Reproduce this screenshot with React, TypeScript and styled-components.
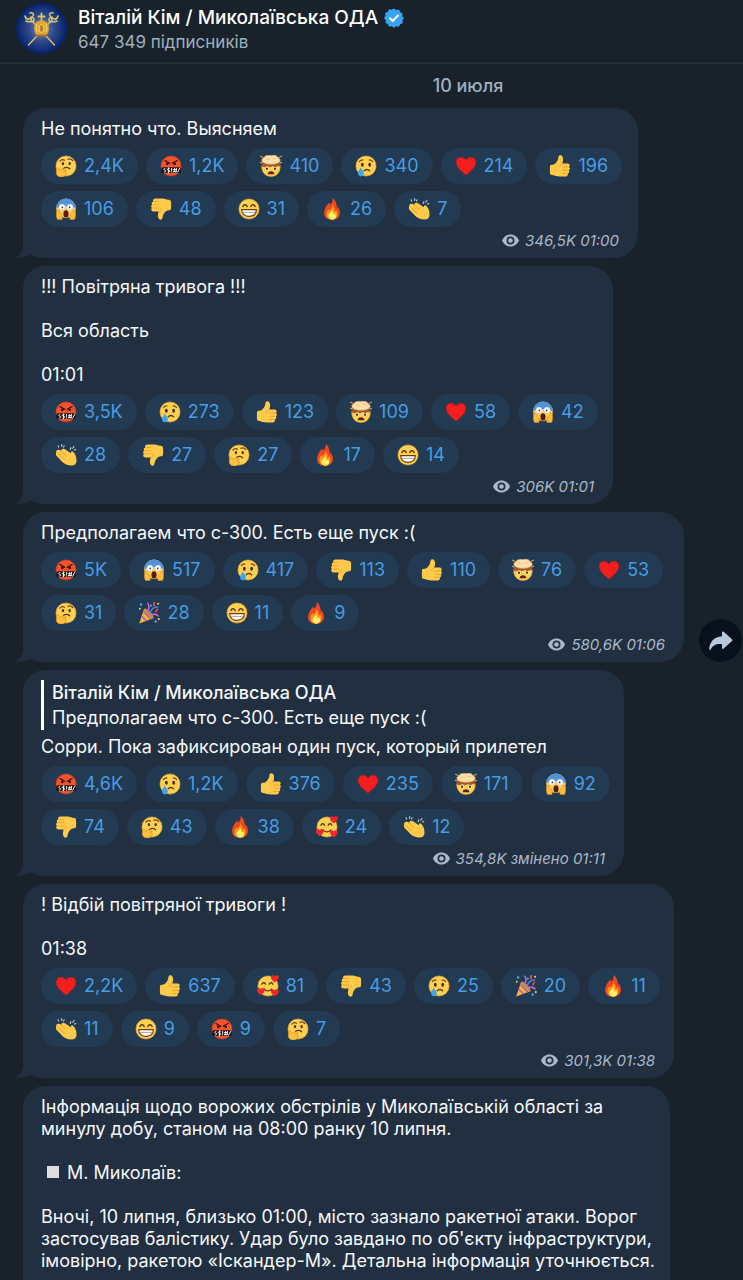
import React from 'react';
import styled, { createGlobalStyle } from 'styled-components';

const Global = createGlobalStyle`
  * { box-sizing: border-box; }
  body {
    margin: 0;
    background: #19222b;
    color: #f4f8fb;
    font-family: Inter, "Liberation Sans", sans-serif;
    font-size: 18px;
    line-height: 22px;
  }
  p, h1, button { margin: 0; font: inherit; }
`;

const Page = styled.div`
  height: 100vh;
  display: flex;
  flex-direction: column;
  overflow: hidden;
`;

const Header = styled.header`
  flex: none;
  display: flex;
  align-items: center;
  gap: 11px;
  height: 64px;
  padding: 0 16px 5px;
  border-bottom: 2px solid #212e3a;
`;

const Heading = styled.div`
  padding-top: 2px;
`;

const Title = styled.h1`
  display: flex;
  align-items: center;
  gap: 6px;
  font-size: 19px;
  font-weight: 500;
  line-height: 25px;
  color: #ffffff;
`;

const Subtitle = styled.p`
  font-size: 17px;
  line-height: 24px;
  color: #9fb0be;
`;

const Feed = styled.main`
  display: flex;
  flex-direction: column;
  gap: 8px;
  min-height: 0;
  padding: 10px 0 0 23px;
  > * { flex: none; }
`;

const DateLabel = styled.div`
  padding: 0 0 2px 170px;
  text-align: center;
  font-weight: 500;
  color: #9fb1c1;
  line-height: 24px;
`;

const MessageRow = styled.div`
  display: flex;
  align-items: flex-end;
  gap: 15px;
`;

const Bubble = styled.article<{ $width: number; $continues?: boolean }>`
  position: relative;
  flex: 0 1 ${(p) => p.$width}px;
  padding: 10px 10px ${(p) => (p.$continues ? 40 : 8)}px 18px;
  border-radius: 22px 24px 24px 20px;
  background: #222f41;
`;

const Tail = styled.svg`
  position: absolute;
  left: -8px;
  bottom: 0;
`;

const Body = styled.p`
  white-space: pre-line;
`;

const Quote = styled.blockquote`
  margin: 0 0 6px;
  padding-left: 8px;
  border-left: 3px solid #ffffff;
  line-height: 25px;
`;

const Author = styled.p`
  font-weight: 500;
`;

const Reactions = styled.div`
  display: flex;
  flex-wrap: wrap;
  gap: 7px 8px;
  margin-top: 8px;
`;

const Reaction = styled.button`
  display: flex;
  align-items: center;
  gap: 7px;
  height: 36px;
  padding: 0 14px;
  border: 0;
  border-radius: 18px;
  background: #223a52;
  color: #479de4;
`;

const Meta = styled.footer`
  display: flex;
  align-items: center;
  justify-content: flex-end;
  gap: 6px;
  margin: 4px 9px 0 0;
  font-size: 15px;
  line-height: 19px;
  font-style: italic;
  color: #a9b8c9;
`;

const Share = styled.button`
  display: grid;
  place-items: center;
  width: 43px;
  height: 43px;
  padding: 0;
  border: 0;
  border-radius: 50%;
  background: #06111d;
`;

const Square = styled.span`
  display: inline-block;
  width: 12px;
  height: 12px;
  margin: 0 8px 1px 6px;
  background: #dcdee0;
`;

type Kind = 'think' | 'curse' | 'blown' | 'cry' | 'heart' | 'up' | 'down' | 'scream' | 'grin' | 'fire' | 'clap' | 'party' | 'adore';

const Face = ({ fill = '#ffd052', edge = '#f0a92f' }) => (
  <circle cx="18" cy="18" r="16.5" fill={fill} stroke={edge} strokeWidth="1" />
);

const Hand = () => (
  <g>
    <path d="M1.500 19c0-2 1.500-3 4-3 4 0 8-5 9.500-9.500.4-1.500 0-5.500 3-6 4-.3 5.500 4 5 8-.2 2-.8 4-1.300 5.500H30c4.500 0 5 4.500 2.500 5.600 2.500 1.400 2.200 4.700-.3 5.500 1.900 1.600 1 4.600-1.500 5.100 1.100 2.400-.6 4.800-3.500 4.800H17c-4 0-7-1-9.500-2-3.500 0-6-1-6-4z" fill="#ffc94a" />
    <path d="M22 19.700h9M22.500 25h8.500M22.500 30.200h7" stroke="#e39b2c" strokeWidth="1.200" strokeLinecap="round" />
    <path d="M21.500 14c-3 1-4 3-4 5" stroke="#e39b2c" strokeWidth="1.200" fill="none" strokeLinecap="round" />
  </g>
);

const heartPath = 'M18 33C10 26 2 20 2 11.500 2 2.500 14 .5 18 9 22 .5 34 2.500 34 11.500 34 20 26 26 18 33z';

const art: Record<Kind, React.ReactNode> = {
  think: (
    <g>
      <Face />
      <path d="M8 10c2-2.500 5-3 7.500-1.500M21 7c3-1.500 6-.5 8 2" stroke="#6b3f14" strokeWidth="2" fill="none" strokeLinecap="round" />
      <ellipse cx="13" cy="14" rx="1.900" ry="2.600" fill="#4a2b10" />
      <ellipse cx="24" cy="14" rx="1.900" ry="2.600" fill="#4a2b10" />
      <path d="M14 22c3-2 7-2 10 .5" stroke="#5c3512" strokeWidth="2" fill="none" strokeLinecap="round" />
      <path d="M3 22c2-1 3 0 3.500 3l9-2.500c3-.5 3.500 2.500 1 3.300L14 27c4 0 5 2 4 4-1 3.500-4 5-8 5-5 0-8-3-8-7z" fill="#ffc13d" stroke="#d98a22" strokeWidth="1" />
    </g>
  ),
  curse: (
    <g>
      <Face fill="#f2552c" edge="#d93c1c" />
      <path d="M8 9l8 4.500M28 9l-8 4.500" stroke="#3b0d08" strokeWidth="2.200" strokeLinecap="round" />
      <circle cx="12" cy="14.500" r="2.300" fill="#3b0d08" />
      <circle cx="24" cy="14.500" r="2.300" fill="#3b0d08" />
      <rect x="2" y="20" width="32" height="9.500" rx="3" fill="#251417" />
      <path d="M8 22c-3 0-2 3 0 3s2 3-1 3M15 22c-4 0-4 3-1 3s3 3-1 3M14 21v8M19 22v3.500M19 27.500v.8M22 24h5M22 27h5M24 22l-1 6M27 22l-1 6M32 22l-3 6" stroke="#fff" strokeWidth="1.500" fill="none" strokeLinecap="round" />
    </g>
  ),
  blown: (
    <g>
      <path d="M3 17h30c1 10-5 18-15 18S2 27 3 17z" fill="#ffce54" stroke="#eba631" />
      <path d="M3 14l30 0v5l-4-1-4 2-4-2-5 2-4-2-4 2-5-1z" fill="#a9552a" />
      <path d="M6 13c-4-2-4-7 0-8 2-5 9-5 12-4 4-2 10-1 12 4 4 1 4 6 0 8-5 3-19 3-24 0z" fill="#fbdfab" stroke="#d69b55" />
      <path d="M9 8c3-2 5-1 7 0M20 7c3-2 5-1 7 1" stroke="#e5b877" strokeWidth="1.300" fill="none" />
      <path d="M1 2l4 2M35 2l-4 2M.5 12l3 1M35.500 12l-3 1" stroke="#d39a58" strokeWidth="2" strokeLinecap="round" />
      <circle cx="11.500" cy="22.500" r="2.800" fill="#fff" />
      <circle cx="24.500" cy="22.500" r="2.800" fill="#fff" />
      <circle cx="11.500" cy="22.500" r="1.900" fill="#4a2b10" />
      <circle cx="24.500" cy="22.500" r="1.900" fill="#4a2b10" />
      <path d="M12.500 31.500c0-6.500 11-6.500 11 0z" fill="#572414" />
    </g>
  ),
  cry: (
    <g>
      <Face />
      <path d="M7 11c1-2 3-3 6-3M29 11c-1-2-3-3-6-3" stroke="#7a4a18" strokeWidth="1.800" fill="none" strokeLinecap="round" />
      <ellipse cx="12" cy="16" rx="2.300" ry="3.200" fill="#4a2b10" />
      <ellipse cx="24" cy="16" rx="2.300" ry="3.200" fill="#4a2b10" />
      <path d="M15 26c2-3 7-3 9 0" stroke="#5c3512" strokeWidth="2.200" fill="none" strokeLinecap="round" />
      <path d="M9.500 20C8 24 5 26 5 30c0 3 2 5 4.700 5s4.800-2 4.800-5c0-4-4-6-5-10z" fill="#3ea6e6" />
    </g>
  ),
  heart: <path d={heartPath} fill="#f51f1f" stroke="#c9151b" strokeWidth="1" />,
  up: <Hand />,
  down: <g transform="rotate(180 18 18)"><Hand /></g>,
  scream: (
    <g>
      <circle cx="18" cy="17" r="16" fill="#ffce54" />
      <path d="M2 17a16 16 0 0 1 32 0c-8-5-24-5-32 0z" fill="#4f93dd" />
      <circle cx="11.500" cy="15" r="5" fill="#fff" stroke="#a6b8cc" strokeWidth=".8" />
      <circle cx="24.500" cy="15" r="5" fill="#fff" stroke="#a6b8cc" strokeWidth=".8" />
      <circle cx="12" cy="15.500" r="1.400" fill="#333" />
      <circle cx="24" cy="15.500" r="1.400" fill="#333" />
      <ellipse cx="18" cy="26" rx="4.200" ry="6" fill="#5a1c12" />
      <path d="M3 20c3-1 4 1 4.500 4 4 2 5 5 4 11H4c-2-4-2-10-1-15zM33 20c-3-1-4 1-4.500 4-4 2-5 5-4 11H32c2-4 2-10 1-15z" fill="#ffbe3e" stroke="#dc8d26" />
    </g>
  ),
  grin: (
    <g>
      <Face />
      <path d="M8 14c1.500-4 5.500-4 7 0M21 14c1.500-4 5.500-4 7 0" stroke="#5c3512" strokeWidth="2.300" fill="none" strokeLinecap="round" />
      <path d="M6 19h24c0 7-5 11-12 11S6 26 6 19z" fill="#fff" stroke="#6d3b18" strokeWidth="1.800" />
      <path d="M7 23.500h22" stroke="#9a8068" strokeWidth="1.200" />
    </g>
  ),
  fire: (
    <g>
      <path d="M19 0c1 5-1 8-4 11-1-2-1-3-1-4-5 5-9 11-9 18 0 7 6 11 13 11s13-5 13-12c0-4-2-8-4-11 0 2 0 3-1 4C26 10 24 3 19 0z" fill="#f4471e" />
      <path d="M18 12c1 5-2 6-4 9-1-1-1-2-1-3-3 3-4 5-4 9 0 5 4 8 9 8s9-4 9-9c0-3-1-4-2-6-1 2-2 2-3 2 1-4-1-7-4-10z" fill="#ff9d1c" />
      <path d="M18 20c0 4-6 5-6 10 0 3 3 5.500 6 5.500s7-2 7-5.500c0-2-1-3-2-5-1 1-1 2-3 2 0-3 0-5-2-7z" fill="#fff06a" />
    </g>
  ),
  clap: (
    <g>
      <path d="M2 14c-1-4 3-6 6-4l2 1c1-3 4-4 7-2l9 6c0-3 2-4 4-2 3 3 5 7 5 12 1 6-2 10-7 10-8 0-14-3-19-9L3 20c-2-2-2-4-1-6z" fill="#ffc94a" />
      <path d="M10 11.500l8 7M5 16l10 9" stroke="#dd9529" strokeWidth="1.200" fill="none" strokeLinecap="round" />
      <path d="M5 3l1 2M11 1v3M15 3l-1 2M26 6l-1 3M31 4l-2 3M34 9l-2 1" stroke="#bfd0dc" strokeWidth="1.800" strokeLinecap="round" />
    </g>
  ),
  party: (
    <g>
      <path d="M10 11L2 35l24-9z" fill="#f6b73c" />
      <path d="M9 16l12 12M6 23l8 8" stroke="#b25bb5" strokeWidth="2.500" />
      <ellipse cx="17.500" cy="18.500" rx="3.500" ry="10.500" transform="rotate(-45 17.500 18.500)" fill="#c98a4a" />
      <path d="M15 15c4-4 4-8 1-13M22 21c4-2 8-1 11 2" stroke="#b66bd8" strokeWidth="2.500" fill="none" strokeLinecap="round" />
      <path d="M20 17c2-6 6-9 12-9" stroke="#4a84f0" strokeWidth="2.500" fill="none" strokeLinecap="round" />
      <path d="M27 1c-2 2-2 4 0 5M32 12c-2 1-3 3-2 4" stroke="#ef5350" strokeWidth="2.500" fill="none" strokeLinecap="round" />
      <g fill="#4aa3f0"><circle cx="5" cy="4" r="2" /><circle cx="29" cy="32" r="2" /><circle cx="21" cy="6" r="1.800" /></g>
      <g fill="#ffd24d"><circle cx="3" cy="11" r="1.500" /><circle cx="34" cy="28" r="1.700" /><circle cx="33" cy="3" r="1.700" /></g>
    </g>
  ),
  adore: (
    <g>
      <Face />
      <path d="M8 15c1-3 5-3 6 0M20 15c1-3 5-3 6 0M12 23c3 4 9 4 12 0" stroke="#5c3512" strokeWidth="2.200" fill="none" strokeLinecap="round" />
      <g fill="#f0262d">
        <path d={heartPath} transform="translate(22 -1) scale(.4)" />
        <path d={heartPath} transform="translate(-1 20) scale(.4)" />
        <path d={heartPath} transform="translate(22 22) scale(.4)" />
      </g>
    </g>
  ),
};

const Emoji = ({ kind }: { kind: Kind }) => (
  <svg width="22" height="22" viewBox="0 0 36 36" aria-hidden="true">{art[kind]}</svg>
);

const Eye = () => (
  <svg width="17" height="13" viewBox="0 0 17 13" aria-hidden="true">
    <path fillRule="evenodd" d="M8.500.5C4.500.5 1.500 3 0 6.500 1.500 10 4.500 12.500 8.500 12.500S15.500 10 17 6.500C15.500 3 12.500.5 8.500.5zM8.500 2.500a4 4 0 1 1 0 8 4 4 0 0 1 0-8z" fill="#a9b8cc" />
    <circle cx="8.500" cy="6.500" r="2.300" fill="#a9b8cc" />
  </svg>
);

const Avatar = () => (
  <svg width="51" height="51" viewBox="0 0 51 51" role="img" aria-label="Віталій Кім">
    <defs>
      <radialGradient id="avatar">
        <stop offset="0" stopColor="#8c98b8" />
        <stop offset=".45" stopColor="#34508f" />
        <stop offset="1" stopColor="#05206a" />
      </radialGradient>
    </defs>
    <circle cx="25.500" cy="25.500" r="25.500" fill="url(#avatar)" />
    <g fill="none" stroke="#d6c06a" strokeLinecap="round" strokeLinejoin="round">
      <path d="M12.500 42L35 18M38.500 42L16 18" strokeWidth="1.400" />
      <path d="M9 13c1 4 5 4 6 1 1 3-1 5 2 5 2-1 1-4-1-5M14 10c3-1 4 1 3 3M10 18c2 1 4 1 6 0" strokeWidth="1.600" />
      <path d="M42 13c-1 4-5 4-6 1-1 3 1 5-2 5-2-1-1-4 1-5M37 10c-3-1-4 1-3 3M41 18c-2 1-4 1-6 0" strokeWidth="1.600" />
      <path d="M25.500 10.500V18M22.500 13.500h6" strokeWidth="1.800" />
    </g>
    <path d="M20.500 32c-3-3-3-11 0-13 2-2 8-2 10 0 3 2 3 10 0 13z" fill="#dca832" />
    <path d="M20 32.500h11" stroke="#b86a2e" strokeWidth="1.800" />
    <ellipse cx="25.500" cy="25.500" rx="2.500" ry="4" fill="#c07c30" stroke="#f5da74" />
    <path d="M21 21c-1 3-1 6 0 8M30 21c1 3 1 6 0 8" stroke="#f5da74" fill="none" />
  </svg>
);

const Verified = () => (
  <svg width="20" height="20" viewBox="0 0 20 20" role="img" aria-label="Verified">
    <path d="M10 .5l2.300 1.500 2.800-.3 1 2.600 2.500 1.300-.4 2.700L20 10l-1.500 2.300.3 2.700-2.600 1.200-1.300 2.500-2.700-.4L10 19.800l-2.300-1.500-2.800.3-1-2.600-2.500-1.300.4-2.700L0 10l1.500-2.300L1.200 5l2.600-1.200L5.100 1.300l2.700.4z" fill="#37a3f6" />
    <path d="M6 10.300l2.700 2.700L14 7.500" stroke="#fff" strokeWidth="2" fill="none" strokeLinecap="round" strokeLinejoin="round" />
  </svg>
);

interface Post {
  width: number;
  text: string;
  quote?: { author: string; text: string };
  reactions: [Kind, string][];
  meta: string;
  share?: boolean;
}

const posts: Post[] = [
  {
    width: 615,
    text: 'Не понятно что. Выясняем',
    reactions: [['think', '2,4K'], ['curse', '1,2K'], ['blown', '410'], ['cry', '340'], ['heart', '214'], ['up', '196'], ['scream', '106'], ['down', '48'], ['grin', '31'], ['fire', '26'], ['clap', '7']],
    meta: '346,5K 01:00',
  },
  {
    width: 590,
    text: '!!! Повітряна тривога !!!\n\nВся область\n\n01:01',
    reactions: [['curse', '3,5K'], ['cry', '273'], ['up', '123'], ['blown', '109'], ['heart', '58'], ['scream', '42'], ['clap', '28'], ['down', '27'], ['think', '27'], ['fire', '17'], ['grin', '14']],
    meta: '306K 01:01',
  },
  {
    width: 661,
    text: 'Предполагаем что с-300. Есть еще пуск :(',
    reactions: [['curse', '5K'], ['scream', '517'], ['cry', '417'], ['down', '113'], ['up', '110'], ['blown', '76'], ['heart', '53'], ['think', '31'], ['party', '28'], ['grin', '11'], ['fire', '9']],
    meta: '580,6K 01:06',
    share: true,
  },
  {
    width: 601,
    quote: { author: 'Віталій Кім / Миколаївська ОДА', text: 'Предполагаем что с-300. Есть еще пуск :(' },
    text: 'Сорри. Пока зафиксирован один пуск, который прилетел',
    reactions: [['curse', '4,6K'], ['cry', '1,2K'], ['up', '376'], ['heart', '235'], ['blown', '171'], ['scream', '92'], ['down', '74'], ['think', '43'], ['fire', '38'], ['adore', '24'], ['clap', '12']],
    meta: '354,8K змінено 01:11',
  },
  {
    width: 651,
    text: '! Відбій повітряної тривоги !\n\n01:38',
    reactions: [['heart', '2,2K'], ['up', '637'], ['adore', '81'], ['down', '43'], ['cry', '25'], ['party', '20'], ['fire', '11'], ['clap', '11'], ['grin', '9'], ['curse', '9'], ['think', '7']],
    meta: '301,3K 01:38',
  },
];

const Message = ({ post }: { post: Post }) => (
  <MessageRow>
    <Bubble $width={post.width}>
      <Tail width="18" height="22" viewBox="0 0 18 22" aria-hidden="true">
        <path d="M8 0v9c0 6-3 10-7 12.800C7 22 13 20.500 17 18v-8z" fill="#222f41" />
      </Tail>
      {post.quote && (
        <Quote>
          <Author>{post.quote.author}</Author>
          <p>{post.quote.text}</p>
        </Quote>
      )}
      <Body>{post.text}</Body>
      <Reactions>
        {post.reactions.map(([kind, count]) => (
          <Reaction key={kind} type="button">
            <Emoji kind={kind} />
            {count}
          </Reaction>
        ))}
      </Reactions>
      <Meta>
        <Eye />
        {post.meta}
      </Meta>
    </Bubble>
    {post.share && (
      <Share type="button" aria-label="Переслати">
        <svg width="24" height="20" viewBox="0 0 24 20" aria-hidden="true">
          <path d="M13 1.500c0-1 1-1.300 1.700-.7l8.300 7.500c.6.600.6 1.300 0 1.800l-8.300 7.500c-.7.600-1.700.3-1.700-.7V13C7 12.500 3.500 14.500 1.500 18.800c-.4.800-1.200.6-1.200-.3C.3 11 5 5.800 13 5.200z" fill="#b5c8dc" />
        </svg>
      </Share>
    )}
  </MessageRow>
);

export default function App() {
  return (
    <Page>
      <Global />
      <Header>
        <Avatar />
        <Heading>
          <Title>Віталій Кім / Миколаївська ОДА <Verified /></Title>
          <Subtitle>647 349 підписників</Subtitle>
        </Heading>
      </Header>
      <Feed>
        <DateLabel>10 июля</DateLabel>
        {posts.map((post) => <Message key={post.meta} post={post} />)}
        <MessageRow>
          <Bubble $width={647} $continues>
            <Body>
              {'Інформація щодо ворожих обстрілів у Миколаївській області за минулу добу, станом на 08:00 ранку 10 липня.\n\n'}
              <Square />
              {'М. Миколаїв:\n\nВночі, 10 липня, близько 01:00, місто зазнало ракетної атаки. Ворог застосував балістику. Удар було завдано по об\'єкту інфраструктури, імовірно, ракетою «Іскандер-М». Детальна інформація уточнюється.'}
            </Body>
          </Bubble>
        </MessageRow>
      </Feed>
    </Page>
  );
}
